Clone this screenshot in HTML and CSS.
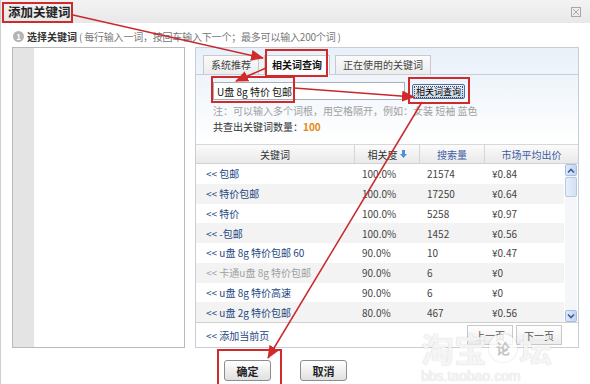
FILE: index.html
```html
<!DOCTYPE html>
<html>
<head>
  <meta charset="utf-8">
  <title>添加关键词</title>
  <link rel="stylesheet" href="styles.css">
</head>
<body>
  <div class="dialog">
    <div class="titlebar">
      <span class="title">添加关键词</span>
      <svg class="close" width="10" height="10" viewBox="0 0 10 10">
        <rect x="0.5" y="0.5" width="9" height="9" fill="none" stroke="#a8a8a8"/>
        <path d="M2 2 L8 8 M8 2 L2 8" stroke="#a8a8a8" stroke-width="1"/>
      </svg>
    </div>

    <div class="step">
      <span class="num">1</span>
      <b>选择关键词</b>
      <span class="hint">( 每行输入一词，按回车输入下一个；最多可以输入200个词 )</span>
    </div>

    <div class="main">
      <div class="wordbox">
        <div class="gutter"></div>
        <div class="words"></div>
      </div>

      <div class="panel">
        <div class="tabs">
          <span class="tab">系统推荐</span>
          <span class="tab active">相关词查询</span>
          <span class="tab">正在使用的关键词</span>
        </div>

        <div class="query">
          <div class="query-row">
            <input class="query-input" type="text" value="U盘 8g 特价 包邮">
            <button class="query-btn"><span>相关词查询</span></button>
          </div>
          <p class="note">注：可以输入多个词根，用空格隔开，例如：女装 短袖 蓝色</p>
          <p class="count">共查出关键词数量：<b>100</b></p>
        </div>

        <div class="thead">
          <div class="th">关键词</div>
          <div class="th">相关度
            <svg width="7" height="8" viewBox="0 0 7 8"><path d="M2 0 H5 V4 H7 L3.5 8 L0 4 H2 Z" fill="#4f8fd6"/></svg>
          </div>
          <div class="th blue">搜索量</div>
          <div class="th blue">市场平均出价</div>
        </div>

        <div class="tbody">
          <div class="rows">
            <div class="row"><span class="kw">&lt;&lt; 包邮</span><span>100.0%</span><span>21574</span><span>¥0.84</span></div>
            <div class="row"><span class="kw">&lt;&lt; 特价包邮</span><span>100.0%</span><span>17250</span><span>¥0.64</span></div>
            <div class="row"><span class="kw">&lt;&lt; 特价</span><span>100.0%</span><span>5258</span><span>¥0.97</span></div>
            <div class="row"><span class="kw">&lt;&lt; -包邮</span><span>100.0%</span><span>1452</span><span>¥0.56</span></div>
            <div class="row"><span class="kw">&lt;&lt; u盘 8g 特价包邮 60</span><span>90.0%</span><span>10</span><span>¥0.47</span></div>
            <div class="row"><span class="kw used">&lt;&lt; 卡通u盘 8g 特价包邮</span><span>90.0%</span><span>6</span><span>¥0</span></div>
            <div class="row"><span class="kw">&lt;&lt; u盘 8g 特价高速</span><span>90.0%</span><span>6</span><span>¥0</span></div>
            <div class="row"><span class="kw">&lt;&lt; u盘 2g 特价包邮</span><span>80.0%</span><span>467</span><span>¥0.56</span></div>
          </div>
          <div class="scrollbar">
            <div class="sb-btn">
              <svg width="8" height="5" viewBox="0 0 8 5"><path d="M1 4.5 L4 1.5 L7 4.5" fill="none" stroke="#3d5f9a" stroke-width="1.6"/></svg>
            </div>
            <div class="sb-thumb"></div>
            <div class="sb-track"></div>
            <div class="sb-btn">
              <svg width="8" height="5" viewBox="0 0 8 5"><path d="M1 0.5 L4 3.5 L7 0.5" fill="none" stroke="#3d5f9a" stroke-width="1.6"/></svg>
            </div>
          </div>
        </div>

        <div class="tfoot">
          <span class="kw">&lt;&lt; 添加当前页</span>
          <div class="pager">
            <span class="page-btn">上一页</span>
            <span class="page-btn">下一页</span>
          </div>
        </div>
      </div>
    </div>

    <div class="actions">
      <button class="btn">确定</button>
      <button class="btn">取消</button>
    </div>

    <div class="watermark">
      <div class="wm-logo">淘宝<span class="wm-ring">论</span>坛</div>
      <div class="wm-url">bbs.taobao.com</div>
    </div>

    <!-- red annotations drawn over the screenshot -->
    <svg class="marks" width="590" height="384" viewBox="0 0 590 384">
      <defs>
        <marker id="head" markerUnits="userSpaceOnUse" markerWidth="13" markerHeight="11" viewBox="0 0 13 11" refX="12" refY="5.5" orient="auto">
          <path d="M0 0 L13 5.5 L0 11 Z" fill="#d02a2a"/>
        </marker>
      </defs>
      <g fill="none" stroke="#d02a2a" stroke-width="2">
        <rect x="3" y="3" width="69" height="19"/>
        <rect x="266" y="50" width="61" height="26"/>
        <rect x="212" y="77" width="82" height="25"/>
        <rect x="409" y="78" width="60" height="25"/>
        <rect x="218" y="350" width="63" height="36"/>
      </g>
      <g stroke="#c8282c" stroke-width="1.5" marker-end="url(#head)">
        <line x1="73" y1="15" x2="263" y2="58"/>
        <line x1="266" y1="68" x2="236" y2="81"/>
        <line x1="294" y1="88" x2="414" y2="97"/>
        <line x1="422" y1="102" x2="268" y2="358"/>
      </g>
    </svg>
  </div>
</body>
</html>
```

FILE: styles.css
```css
body {
  margin: 0;
  width: 590px;
  height: 384px;
  overflow: hidden;
  background: #fff;
  font-family: "Noto Sans CJK SC", "Liberation Sans", sans-serif;
  font-size: 10px;
  color: #333;
}

p {
  margin: 0;
}

.dialog {
  position: relative;
  height: 384px;
  border-left: 1px solid #cfcfcf;
  box-sizing: border-box;
}

.titlebar {
  height: 23px;
  display: flex;
  align-items: center;
  justify-content: space-between;
  padding: 0 9px 0 7px;
  background: linear-gradient(#f3f3f3, #e8e8e8);
}

.title {
  font-size: 12.5px;
  font-weight: bold;
  color: #222;
}

.step {
  display: flex;
  align-items: center;
  height: 14px;
  padding: 6px 0 4px 12px;
  color: #333;
}

.step .num {
  width: 11px;
  height: 11px;
  border-radius: 50%;
  background: #b4b4b4;
  color: #fff;
  font-size: 8px;
  line-height: 11px;
  text-align: center;
  font-weight: bold;
  margin-right: 3px;
}

.step .hint {
  color: #777;
  margin-left: 2px;
  letter-spacing: -0.2px;
}

.main {
  display: flex;
  gap: 10px;
  padding-left: 11px;
  height: 301px;
}

.wordbox {
  width: 173px;
  height: 301px;
  display: flex;
  border: 1px solid #b9b9b9;
  box-sizing: border-box;
}

.gutter {
  width: 21px;
  background: #e4e4e4;
}

.words {
  flex: 1;
  background: #fff;
}

.panel {
  width: 384px;
  height: 301px;
  display: flex;
  flex-direction: column;
  border: 1px solid #c7ced6;
  box-sizing: border-box;
  background: linear-gradient(#e8f0f9, #fff 95px);
}

.tabs {
  display: flex;
  gap: 5px;
  padding: 7px 0 0 7px;
  border-bottom: 1px solid #c7ced6;
}

.tab {
  height: 18px;
  line-height: 18px;
  padding: 0 7px;
  border: 1px solid #c9c9c9;
  border-bottom: none;
  background: linear-gradient(#fbfbfb, #ececec);
  color: #444;
}

.tab.active {
  background: #fff;
  color: #111;
  font-weight: bold;
  margin-bottom: -1px;
  height: 19px;
}

.query {
  padding: 7px 0 0 17px;
}

.query-row {
  display: flex;
  align-items: center;
}

.query-input {
  width: 192px;
  height: 18px;
  box-sizing: border-box;
  border: 1px solid #a8afb8;
  padding: 0 3px;
  font-family: inherit;
  font-size: 10px;
  color: #111;
}

.query-btn {
  margin-left: 7px;
  width: 53px;
  height: 15px;
  padding: 1px;
  border: 1px solid #4d6fa6;
  border-radius: 2px;
  background: linear-gradient(#eef3fa, #c8d6ea);
  font-family: inherit;
  font-size: 9px;
  color: #000;
  line-height: 11px;
}

.query-btn span {
  display: block;
  border: 1px dotted #444;
  height: 10px;
  line-height: 10px;
  white-space: nowrap;
}

.note {
  margin-top: 4px;
  line-height: 14px;
  color: #a0a0a0;
}

.count {
  margin-top: 2px;
  line-height: 14px;
  color: #333;
}

.count b {
  color: #e8870f;
}

.thead {
  margin-top: 10px;
  display: grid;
  grid-template-columns: 159px 65px 65px 1fr;
  height: 18px;
  border-top: 1px solid #d8d8d8;
  border-bottom: 1px solid #d2d2d2;
  background: linear-gradient(#fbfbfb, #e9e9e9);
}

.th {
  display: flex;
  align-items: center;
  justify-content: center;
  gap: 2px;
  border-right: 1px solid #d6d6d6;
  color: #333;
}

.th:last-child {
  border-right: none;
}

.th.blue {
  color: #3d5ea3;
}

.tbody {
  display: flex;
  height: 158px;
}

.rows {
  width: 368px;
}

.row {
  display: grid;
  grid-template-columns: 159px 65px 65px 1fr;
  height: 19.75px;
  align-items: center;
  color: #444;
}

.row:nth-child(even) {
  background: #f3f3f3;
}

.row span {
  padding-left: 7px;
}

.row .kw {
  padding-left: 10px;
}

.kw {
  color: #24477f;
}

.kw.used {
  color: #a0a0a0;
}

.scrollbar {
  width: 12px;
  margin-left: 1px;
  display: flex;
  flex-direction: column;
  gap: 1px;
  background: #f4f6fa;
}

.sb-btn {
  height: 12px;
  display: flex;
  align-items: center;
  justify-content: center;
  border: 1px solid #a9bde0;
  border-radius: 2px;
  background: linear-gradient(90deg, #dfe9f8, #c2d4f1);
  box-sizing: border-box;
}

.sb-thumb {
  height: 20px;
  border: 1px solid #b7c8e6;
  border-radius: 2px;
  background: linear-gradient(90deg, #e7eefa, #d3e0f5);
  box-sizing: border-box;
}

.sb-track {
  flex: 1;
}

.tfoot {
  flex: 1;
  display: flex;
  align-items: center;
  justify-content: space-between;
  padding: 0 16px 0 10px;
  border-top: 1px solid #d0d0d0;
}

.pager {
  display: flex;
  gap: 3px;
}

.page-btn {
  width: 46px;
  height: 20px;
  line-height: 20px;
  text-align: center;
  border: 1px solid #c8c8c8;
  background: linear-gradient(#fff, #ededed);
  box-sizing: border-box;
  color: #555;
}

.actions {
  display: flex;
  gap: 29px;
  padding: 12px 0 0 223px;
}

.btn {
  width: 47px;
  height: 21px;
  border: 1px solid #8d8d8d;
  border-radius: 3px;
  background: linear-gradient(#fff, #e0e0e0);
  font-family: inherit;
  font-size: 11px;
  font-weight: bold;
  color: #222;
  padding: 0;
}

.watermark {
  position: absolute;
  left: 420px;
  top: 328px;
  color: rgba(255, 255, 255, 0.85);
  text-shadow: 0 0 1px rgba(0, 0, 0, 0.25);
  pointer-events: none;
}

.wm-logo {
  font-size: 33px;
  font-weight: bold;
  line-height: 40px;
  display: flex;
  align-items: center;
}

.wm-ring {
  font-size: 14px;
  width: 28px;
  height: 28px;
  line-height: 28px;
  text-align: center;
  border-radius: 50%;
  background: rgba(255, 255, 255, 0.75);
  box-shadow: 0 0 2px rgba(0, 0, 0, 0.2);
  color: #c4c4c4;
  text-shadow: none;
  margin: 0 2px;
}

.wm-url {
  font-family: "Liberation Sans", sans-serif;
  font-size: 14px;
  line-height: 16px;
}

.marks {
  position: absolute;
  left: -1px;
  top: 0;
  pointer-events: none;
}
```
